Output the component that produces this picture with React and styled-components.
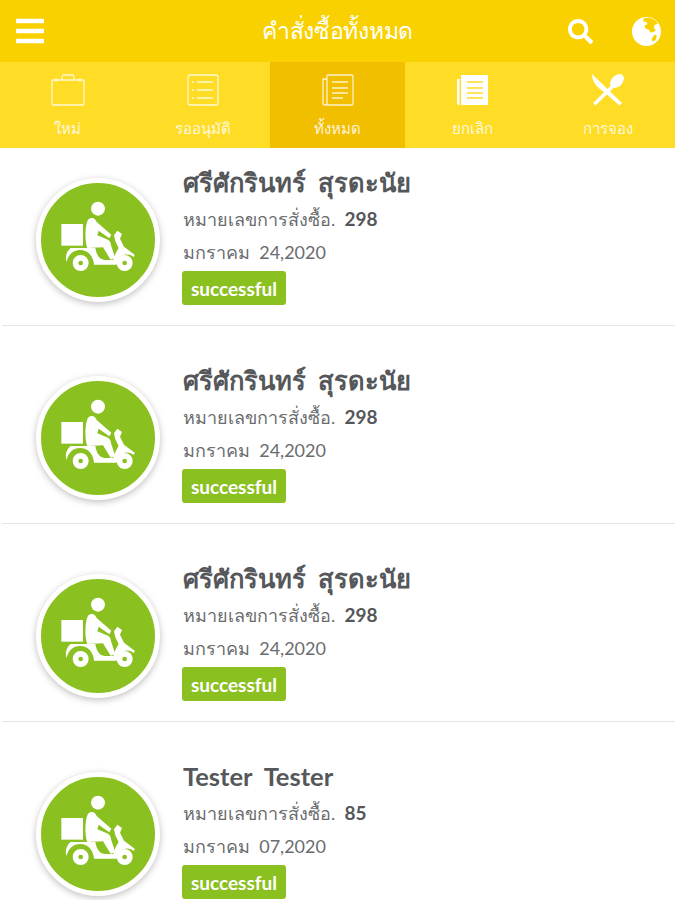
import React from "react";
import styled, { createGlobalStyle } from "styled-components";
import { FaBars, FaSearch } from "react-icons/fa";

const orders = [
  { name: "ศรีศักรินทร์  สุรดะนัย", no: "298", date: "มกราคม  24,2020" },
  { name: "ศรีศักรินทร์  สุรดะนัย", no: "298", date: "มกราคม  24,2020" },
  { name: "ศรีศักรินทร์  สุรดะนัย", no: "298", date: "มกราคม  24,2020" },
  { name: "Tester  Tester", no: "85", date: "มกราคม  07,2020" }
];

const BagIcon = () => (
  <svg width="36" height="34" viewBox="0 0 36 34" fill="none" stroke="#fff" strokeWidth="1.3" opacity="0.8">
    <rect x="2" y="7" width="32" height="25" rx="1" />
    <path d="M12 7V4a2 2 0 0 1 2-2h8a2 2 0 0 1 2 2v3M6 5v4M30 5v4" />
  </svg>
);

const ListIcon = () => (
  <svg width="34" height="34" viewBox="0 0 34 34" fill="none" stroke="#fff" strokeWidth="1.3" opacity="0.8">
    <rect x="2" y="2" width="30" height="30" rx="2" />
    <path d="M11 9h16M11 17h16M11 25h16M6 9h2M6 17h2M6 25h2" />
  </svg>
);

const NewsIcon = () => (
  <svg width="34" height="34" viewBox="0 0 34 34" fill="none" stroke="#fff" strokeWidth="1.3" opacity="0.8">
    <rect x="6" y="2" width="26" height="30" rx="1" />
    <path d="M6 6H2v24a2 2 0 0 0 2 2h2M11 9h16M11 15h16M11 20h16M11 25h11" />
  </svg>
);

const NoteIcon = () => (
  <svg width="34" height="34" viewBox="0 0 34 34">
    <path fill="#fff" d="M5 2h27v30H5zM1 6h2.500v26H3a2 2 0 0 1-2-2z" />
    <path stroke="#ffdc25" strokeWidth="1.4" d="M11 9h16M11 15h16M11 20h16M11 25h16" />
  </svg>
);

const CutleryIcon = () => (
  <svg width="36" height="34" viewBox="0 0 36 34" fill="#fff">
    <path d="M2 1 L32 30 L29.500 32.500 L14 19 C6 14 2 8 2 1Z" />
    <path d="M3 30 L21 12.500 L23.500 15 L5.500 32.500Z" />
    <ellipse cx="27" cy="8" rx="8" ry="5.500" transform="rotate(-45 27 8)" />
  </svg>
);

const GlobeIcon = () => (
  <svg width="29" height="29" viewBox="0 0 28 28">
    <circle cx="14" cy="14" r="14" fill="#fff" />
    <path
      fill="#f9d100"
      d="M11 1.500l6-1 6 3 2 3-3 1-1 3 2 2-2 2-3 .5-2-3-3-1-1-3 3-1-1-2-3-1zM22 17l2 1-1 4-3 2-1-3z"
    />
  </svg>
);

// traced over the reference at 3x, hence the viewBox
const ScooterIcon = () => (
  <ScooterSvg viewBox="0 0 240 234" fill="#fff">
    <rect x="10" y="78" width="65" height="65" />
    <circle cx="120" cy="32" r="21" />
    <path d="M90 65C100 55 112 60 116 72L160 110L154 121L122 98L118 112L150 125C158 130 158 135 160 145L172 181L158 185L135 148L88 150C80 130 80 85 90 65Z" />
    <path d="M168 112L178 98L192 108L186 122L198 146L230 170L228 177C206 162 182 170 176 200H108C106 174 90 156 66 156C46 156 30 170 26 192C20 176 26 160 38 150H112C116 170 122 183 140 186H166C170 170 176 160 182 150L172 130Z" />
    <path fillRule="evenodd" d="M68 171a24 24 0 1 0 0 48a24 24 0 0 0 0-48zM68 188a7 7 0 1 1 0 14a7 7 0 0 1 0-14z" />
    <path fillRule="evenodd" d="M200 171a24 24 0 1 0 0 48a24 24 0 0 0 0-48zM200 188a7 7 0 1 1 0 14a7 7 0 0 1 0-14z" />
  </ScooterSvg>
);

const tabs = [
  { label: "ใหม่", icon: <BagIcon /> },
  { label: "รออนุมัติ", icon: <ListIcon /> },
  { label: "ทั้งหมด", icon: <NewsIcon />, active: true },
  { label: "ยกเลิก", icon: <NoteIcon /> },
  { label: "การจอง", icon: <CutleryIcon /> }
];

export default function App() {
  return (
    <>
      <GlobalStyle />
      <Page>
        <TopBar>
          <FaBars size={32} color="#fff" />
          <Title>คำสั่งซื้อทั้งหมด</Title>
          <TopIcons>
            <FaSearch size={25} color="#fff" />
            <GlobeIcon />
          </TopIcons>
        </TopBar>
        <Tabs>
          {tabs.map(t => (
            <Tab key={t.label} $active={t.active}>
              {t.icon}
              <TabLabel>{t.label}</TabLabel>
            </Tab>
          ))}
        </Tabs>
        <List>
          {orders.map((o, i) => (
            <Row key={i}>
              <Avatar>
                <ScooterIcon />
              </Avatar>
              <Info>
                <Name>{o.name}</Name>
                <Line>
                  หมายเลขการสั่งซื้อ.  <b>{o.no}</b>
                </Line>
                <Line>{o.date}</Line>
                <Status>successful</Status>
              </Info>
            </Row>
          ))}
        </List>
      </Page>
    </>
  );
}

const GlobalStyle = createGlobalStyle`
  html, body {
    margin: 0;
    padding: 0;
    background: #fff;
    font-family: Lato, "Noto Sans", "DejaVu Sans", sans-serif;
  }
`;
const Page = styled.div`
  width: 675px;
  height: 900px;
  overflow: hidden;
`;
const TopBar = styled.header`
  height: 62px;
  padding: 0 14px;
  display: grid;
  grid-template-columns: 1fr auto 1fr;
  align-items: center;
  background-color: #f9d100;
`;
const Title = styled.h1`
  margin: 0;
  font-size: 23px;
  font-weight: 400;
  letter-spacing: -0.3px;
  color: #fff;
`;
const TopIcons = styled.div`
  display: flex;
  align-items: center;
  justify-content: flex-end;
  gap: 39px;
`;
const Tabs = styled.nav`
  height: 86px;
  display: grid;
  grid-template-columns: repeat(5, 135px);
  background-color: #ffdc25;
`;
const Tab = styled.div`
  display: flex;
  flex-direction: column;
  align-items: center;
  padding-top: 11px;
  background-color: ${props => (props.$active ? "#f2be00" : "transparent")};
`;
const TabLabel = styled.span`
  margin-top: 10px;
  font-size: 15px;
  line-height: 22px;
  color: #fff;
  opacity: 0.85;
`;
const List = styled.div`
  display: flex;
  flex-direction: column;
`;
const Row = styled.div`
  height: 177px;
  margin-left: 2px;
  padding-top: 20px;
  display: flex;
  border-bottom: 1px solid #e6e6e6;
  &:first-child {
    padding-top: 0;
  }
`;
const Avatar = styled.div`
  width: 124px;
  height: 124px;
  margin: 30px 0 0 34px;
  box-sizing: border-box;
  display: flex;
  align-items: center;
  justify-content: center;
  flex-shrink: 0;
  border: 5px solid #fff;
  border-radius: 50%;
  background-color: #8ac020;
  box-shadow: 0 2px 7px rgba(0, 0, 0, 0.25);
`;
const ScooterSvg = styled.svg`
  width: 80px;
  height: 78px;
  margin-bottom: 6px;
`;
const Info = styled.div`
  margin-left: 22px;
  padding-top: 14px;
  display: flex;
  flex-direction: column;
  align-items: flex-start;
`;
const Name = styled.div`
  margin-left: 1px;
  font-size: 25.5px;
  line-height: 40px;
  font-weight: 700;
  color: #55575a;
  white-space: pre;
`;
const Line = styled.div`
  margin-left: 1px;
  font-size: 18px;
  line-height: 33px;
  color: #6a6c6e;
  white-space: pre;
  & b {
    font-size: 19px;
    color: #55575a;
  }
`;
const Status = styled.div`
  width: 104px;
  height: 34px;
  margin-top: 2px;
  display: flex;
  align-items: center;
  justify-content: center;
  border-radius: 3px;
  font-size: 19px;
  font-weight: 700;
  color: #fff;
  background-color: #8ac020;
`;
